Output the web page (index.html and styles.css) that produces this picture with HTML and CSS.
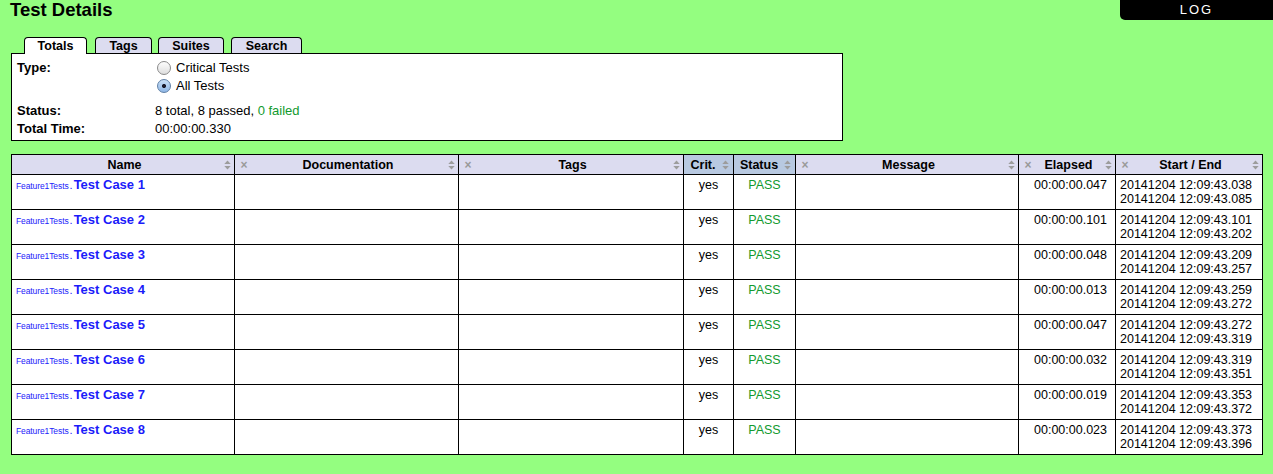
FILE: index.html
```html
<!DOCTYPE html>
<html>
<head>
<meta charset="utf-8">
<link rel="stylesheet" href="styles.css">
</head>
<body>
<div class="log-btn">LOG</div>
<h1 class="title">Test Details</h1>

<div class="tabs">
  <div class="tab active">Totals</div>
  <div class="tab">Tags</div>
  <div class="tab">Suites</div>
  <div class="tab">Search</div>
</div>
<div class="totals">
  <div class="lbl">Type:</div>
  <div class="val">
    <div class="radio-line"><span class="radio"></span>Critical Tests</div>
    <div class="radio-line"><span class="radio checked"></span>All Tests</div>
  </div>
  <div class="lbl gap">Status:</div>
  <div class="val gap">8 total, 8 passed, <span class="green">0 failed</span></div>
  <div class="lbl">Total Time:</div>
  <div class="val">00:00:00.330</div>
</div>

<table class="details">
  <colgroup>
    <col class="c-name"><col class="c-doc"><col class="c-tags"><col class="c-crit">
    <col class="c-status"><col class="c-msg"><col class="c-elapsed"><col class="c-times">
  </colgroup>
  <thead>
    <tr>
      <th><div class="hd"><span class="hx blank"></span><span class="ht">Name</span><svg class="sort" viewBox="0 0 7 11"><polygon points="0,4.5 3.5,0.5 7,4.5"/><polygon points="0,6.5 3.5,10.5 7,6.5"/></svg></div></th>
      <th><div class="hd"><span class="hx">&#215;</span><span class="ht">Documentation</span><svg class="sort" viewBox="0 0 7 11"><polygon points="0,4.5 3.5,0.5 7,4.5"/><polygon points="0,6.5 3.5,10.5 7,6.5"/></svg></div></th>
      <th><div class="hd"><span class="hx">&#215;</span><span class="ht">Tags</span><svg class="sort" viewBox="0 0 7 11"><polygon points="0,4.5 3.5,0.5 7,4.5"/><polygon points="0,6.5 3.5,10.5 7,6.5"/></svg></div></th>
      <th class="blue"><div class="hd tight"><span class="ht">Crit.</span><svg class="sort" viewBox="0 0 7 11"><polygon points="0,4.5 3.5,0.5 7,4.5"/><polygon points="0,6.5 3.5,10.5 7,6.5"/></svg></div></th>
      <th class="blue"><div class="hd tight"><span class="ht">Status</span><svg class="sort" viewBox="0 0 7 11"><polygon points="0,4.5 3.5,0.5 7,4.5"/><polygon points="0,6.5 3.5,10.5 7,6.5"/></svg></div></th>
      <th><div class="hd"><span class="hx">&#215;</span><span class="ht">Message</span><svg class="sort" viewBox="0 0 7 11"><polygon points="0,4.5 3.5,0.5 7,4.5"/><polygon points="0,6.5 3.5,10.5 7,6.5"/></svg></div></th>
      <th><div class="hd"><span class="hx">&#215;</span><span class="ht">Elapsed</span><svg class="sort" viewBox="0 0 7 11"><polygon points="0,4.5 3.5,0.5 7,4.5"/><polygon points="0,6.5 3.5,10.5 7,6.5"/></svg></div></th>
      <th><div class="hd"><span class="hx">&#215;</span><span class="ht">Start / End</span><svg class="sort" viewBox="0 0 7 11"><polygon points="0,4.5 3.5,0.5 7,4.5"/><polygon points="0,6.5 3.5,10.5 7,6.5"/></svg></div></th>
    </tr>
  </thead>
  <tbody>
    <tr><td><span class="parent">Feature1Tests</span><span class="dot">.</span><span class="tname">Test Case 1</span></td><td></td><td></td><td class="center">yes</td><td class="center pass">PASS</td><td></td><td class="right">00:00:00.047</td><td>20141204 12:09:43.038<br>20141204 12:09:43.085</td></tr>
    <tr><td><span class="parent">Feature1Tests</span><span class="dot">.</span><span class="tname">Test Case 2</span></td><td></td><td></td><td class="center">yes</td><td class="center pass">PASS</td><td></td><td class="right">00:00:00.101</td><td>20141204 12:09:43.101<br>20141204 12:09:43.202</td></tr>
    <tr><td><span class="parent">Feature1Tests</span><span class="dot">.</span><span class="tname">Test Case 3</span></td><td></td><td></td><td class="center">yes</td><td class="center pass">PASS</td><td></td><td class="right">00:00:00.048</td><td>20141204 12:09:43.209<br>20141204 12:09:43.257</td></tr>
    <tr><td><span class="parent">Feature1Tests</span><span class="dot">.</span><span class="tname">Test Case 4</span></td><td></td><td></td><td class="center">yes</td><td class="center pass">PASS</td><td></td><td class="right">00:00:00.013</td><td>20141204 12:09:43.259<br>20141204 12:09:43.272</td></tr>
    <tr><td><span class="parent">Feature1Tests</span><span class="dot">.</span><span class="tname">Test Case 5</span></td><td></td><td></td><td class="center">yes</td><td class="center pass">PASS</td><td></td><td class="right">00:00:00.047</td><td>20141204 12:09:43.272<br>20141204 12:09:43.319</td></tr>
    <tr><td><span class="parent">Feature1Tests</span><span class="dot">.</span><span class="tname">Test Case 6</span></td><td></td><td></td><td class="center">yes</td><td class="center pass">PASS</td><td></td><td class="right">00:00:00.032</td><td>20141204 12:09:43.319<br>20141204 12:09:43.351</td></tr>
    <tr><td><span class="parent">Feature1Tests</span><span class="dot">.</span><span class="tname">Test Case 7</span></td><td></td><td></td><td class="center">yes</td><td class="center pass">PASS</td><td></td><td class="right">00:00:00.019</td><td>20141204 12:09:43.353<br>20141204 12:09:43.372</td></tr>
    <tr><td><span class="parent">Feature1Tests</span><span class="dot">.</span><span class="tname">Test Case 8</span></td><td></td><td></td><td class="center">yes</td><td class="center pass">PASS</td><td></td><td class="right">00:00:00.023</td><td>20141204 12:09:43.373<br>20141204 12:09:43.396</td></tr>
  </tbody>
</table>
</body>
</html>
```

FILE: styles.css
```css
html, body {
  margin: 0;
  padding: 0;
}
body {
  background: #94fe80;
  font-family: "Liberation Sans", Arial, sans-serif;
  font-size: 13px;
  color: #000;
  padding: 0 11px 0 11px;
  position: relative;
  min-height: 474px;
  box-sizing: border-box;
}
.title {
  margin: 0 0 0 -1px;
  font-size: 18.5px;
  line-height: 20px;
  font-weight: bold;
}
.log-btn {
  position: absolute;
  top: 0;
  right: 0;
  width: 153px;
  height: 20px;
  background: #000;
  color: #fff;
  border-bottom-left-radius: 5px;
  font-size: 13px;
  letter-spacing: 2px;
  line-height: 20px;
  text-align: center;
}
.tabs {
  display: flex;
  gap: 7px;
  margin: 17px 0 -1px 13px;
  position: relative;
  z-index: 1;
}
.tab {
  height: 15px;
  line-height: 17px;
  padding: 0;
  border: 1px solid #000;
  border-bottom: none;
  border-radius: 4px 4px 0 0;
  background: #dcdcf0;
  font-weight: bold;
  font-size: 12.5px;
  text-align: center;
}
.tab:nth-child(1) { width: 61px; }
.tab:nth-child(2) { width: 55px; margin-left: 1px; }
.tab:nth-child(3) { width: 64px; margin-left: -1px; }
.tab:nth-child(4) { width: 69px; }
.tab.active {
  background: #fff;
  height: 16px;
}
.totals {
  width: 820px;
  border: 1px solid #000;
  background: #fff;
  padding: 5px 5px 2px 5px;
  display: grid;
  grid-template-columns: 138px 1fr;
  line-height: 18px;
}
.lbl {
  font-weight: bold;
}
.gap {
  margin-top: 7px;
}
.radio-line {
  display: flex;
  align-items: center;
  height: 18px;
  margin-left: 2px;
}
.radio {
  display: inline-block;
  width: 12px;
  height: 12px;
  border-radius: 50%;
  border: 1px solid #8a8a8a;
  background: linear-gradient(#fdfdfd, #dedede);
  margin-right: 5px;
  position: relative;
  box-sizing: content-box;
}
.radio.checked {
  border-color: #5f7fa6;
  background: radial-gradient(circle at 50% 50%, #1a1a2a 0 1.8px, transparent 2.3px), linear-gradient(#c9dff6, #8fb7e6);
}
.green {
  color: #119a2e;
}
.details {
  margin-top: 13px;
  width: 1251px;
  table-layout: fixed;
  border-collapse: collapse;
  background: #fff;
  font-size: 12.5px;
}
.c-name { width: 223px; }
.c-doc { width: 224px; }
.c-tags { width: 225px; }
.c-crit { width: 50px; }
.c-status { width: 62px; }
.c-msg { width: 223px; }
.c-elapsed { width: 97px; }
.c-times { width: 147px; }
.details th, .details td {
  border: 1px solid #000;
}
.details th {
  background: #dcdcf0;
  height: 19px;
  padding: 0 3px 0 5px;
  font-weight: bold;
  font-size: 12.5px;
}
.details th.blue {
  background: #b8c9e1;
}
.hd {
  display: flex;
  align-items: center;
}
.hd.tight {
  justify-content: center;
  gap: 6px;
}
.hd.tight .ht {
  flex: none;
}
.hx {
  width: 8px;
  color: #9a9a9a;
  font-size: 12px;
  font-weight: bold;
  line-height: 12px;
}
.hx.blank {
  visibility: hidden;
}
.ht {
  flex: 1;
  text-align: center;
}
.sort {
  width: 7px;
  height: 10px;
  fill: #9c9c9c;
  flex: none;
}
.details tbody tr {
  height: 35px;
}
.details td {
  vertical-align: top;
  padding: 3px 4px 0 4px;
  line-height: 14px;
}
.parent {
  font-size: 8.5px;
  letter-spacing: -0.1px;
  color: #1b1bfa;
}
.dot {
  color: #1b1bfa;
  font-size: 11px;
  margin: 0 1px 0 1px;
}
.tname {
  color: #1b1bfa;
  font-weight: bold;
  font-size: 13px;
}
.center {
  text-align: center;
}
.right {
  text-align: right;
  padding-right: 8px !important;
}
.pass {
  color: #119a2e;
}
```
